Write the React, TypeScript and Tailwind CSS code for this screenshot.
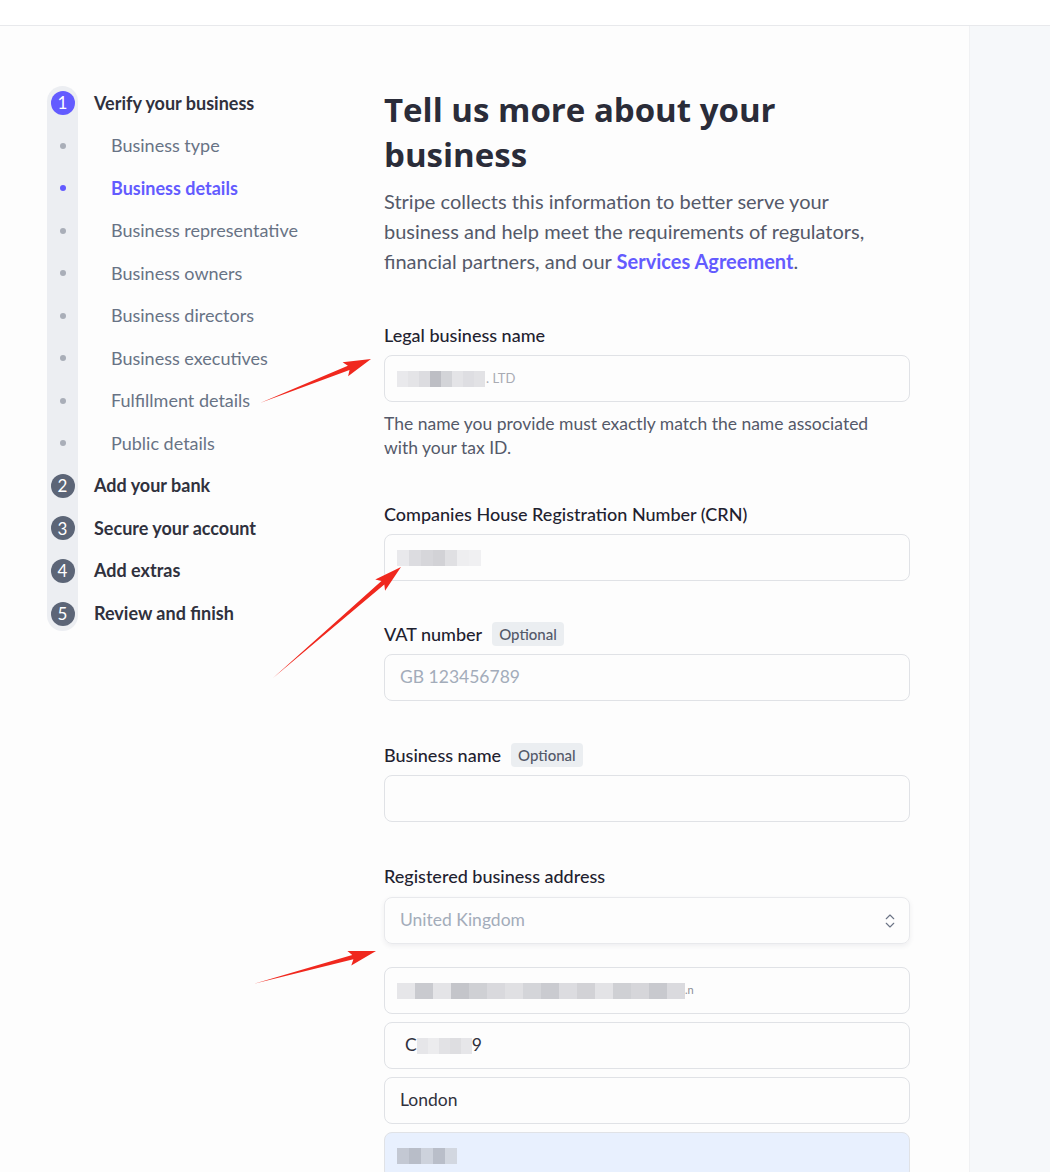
import { ChevronsUpDown } from "lucide-react";

type Step = {
  label: string;
  kind: "main" | "sub";
  num?: number;
  active?: boolean;
};

const steps: Step[] = [
  { label: "Verify your business", kind: "main", num: 1, active: true },
  { label: "Business type", kind: "sub" },
  { label: "Business details", kind: "sub", active: true },
  { label: "Business representative", kind: "sub" },
  { label: "Business owners", kind: "sub" },
  { label: "Business directors", kind: "sub" },
  { label: "Business executives", kind: "sub" },
  { label: "Fulfillment details", kind: "sub" },
  { label: "Public details", kind: "sub" },
  { label: "Add your bank", kind: "main", num: 2 },
  { label: "Secure your account", kind: "main", num: 3 },
  { label: "Add extras", kind: "main", num: 4 },
  { label: "Review and finish", kind: "main", num: 5 },
];

// pixelated redaction blocks
function Mosaic({ cells, w = 11 }: { cells: string[]; w?: number }) {
  return (
    <span className="inline-flex h-[16px] items-stretch align-middle">
      {cells.map((c, i) => (
        <span key={i} style={{ background: c, width: w }} />
      ))}
    </span>
  );
}

function Arrow({ from, to }: { from: [number, number]; to: [number, number] }) {
  const [tx, ty] = from;
  const [px, py] = to;
  const len = Math.hypot(px - tx, py - ty);
  const ux = (px - tx) / len;
  const uy = (py - ty) / len;
  const nx = -uy;
  const ny = ux;
  const L = 24;
  const bx = px - ux * L;
  const by = py - uy * L;
  const hx = px - ux * L * 1.15;
  const hy = py - uy * L * 1.15;
  const pts = [
    [tx, ty],
    [bx + nx * 2.2, by + ny * 2.2],
    [hx + nx * 7.5, hy + ny * 7.5],
    [px, py],
    [hx - nx * 7.5, hy - ny * 7.5],
    [bx - nx * 2.2, by - ny * 2.2],
  ]
    .map((p) => p.join(","))
    .join(" ");
  return <polygon points={pts} fill="#f0281e" />;
}

function Field({
  label,
  optional,
  children,
  help,
  gap = "mt-[7px]",
}: {
  label: string;
  optional?: boolean;
  children: React.ReactNode;
  help?: string;
  gap?: string;
}) {
  return (
    <div>
      <div className="flex h-[26px] items-center gap-[10px]">
        <span className="text-[18px] font-medium text-[#1f2230]">{label}</span>
        {optional && (
          <span className="rounded-[4px] bg-[#ebeef1] px-[7px] py-[1px] text-[15px] font-medium text-[#545969]">Optional</span>
        )}
      </div>
      <div className={gap}>{children}</div>
      {help && <p className="mt-[10px] max-w-[505px] text-[17.5px] leading-[24px] text-[#545969]">{help}</p>}
    </div>
  );
}

function Input({ children, className = "" }: { children?: React.ReactNode; className?: string }) {
  return (
    <div className={"flex h-[47px] items-center rounded-[8px] border border-[#e0e2e6] px-[12px] text-[17.5px] text-[#30313d] " + className}>
      {children}
    </div>
  );
}

export default function App() {
  return (
    <div className="relative h-[1172px] w-[1050px] overflow-hidden bg-white" style={{ fontFamily: "Lato, 'Open Sans', sans-serif" }}>
      <div className="h-[26px] border-b border-[#e8e9ec] bg-white" />
      <div className="flex h-[1146px]">
        <div className="flex w-[969px] bg-[#fdfdfd] pl-[47px] pt-[61px]">
          {/* Sidebar */}
          <aside className="-mt-[1px] w-[337px]">
            <div className="flex">
              <div className="flex w-[31px] flex-col items-center self-start rounded-full bg-[#eceef2]">
                {steps.map((s, i) => (
                  <div
                    key={i}
                    className={
                      "flex justify-center " +
                      (i === 0
                        ? "h-[38.5px] items-start pt-[5px]"
                        : i === steps.length - 1
                        ? "h-[38.5px] items-start pt-[9.5px]"
                        : "h-[42.5px] items-center")
                    }
                  >
                    {s.kind === "main" ? (
                      <span
                        className={
                          "flex h-[24px] w-[24px] items-center justify-center rounded-full text-[17px] text-white " +
                          (s.active ? "bg-[#635bff]" : "bg-[#5c6577]")
                        }
                      >
                        {s.num}
                      </span>
                    ) : (
                      <span className={"h-[6px] w-[6px] rounded-full " + (s.active ? "bg-[#635bff]" : "bg-[#a9aeb8]")} />
                    )}
                  </div>
                ))}
              </div>
              <div className="-mt-[4px] flex flex-col">
                {steps.map((s, i) => (
                  <div
                    key={i}
                    className={
                      "flex h-[42.5px] items-center text-[18px] " +
                      (s.kind === "main"
                        ? "pl-[16px] font-bold text-[#30313d]"
                        : s.active
                        ? "pl-[33px] font-bold text-[#635bff]"
                        : "pl-[33px] text-[#687385]")
                    }
                  >
                    {s.label}
                  </div>
                ))}
              </div>
            </div>
          </aside>

          {/* Form */}
          <main className="w-[526px]">
            <h1
              className="text-[33px] font-bold leading-[45px] text-[#2a2c39]"
              style={{ fontFamily: "'Open Sans', Lato, sans-serif" }}
            >
              Tell us more about your business
            </h1>
            <p className="mt-[9px] max-w-[505px] text-[20px] leading-[30px] text-[#545969]">
              Stripe collects this information to better serve your business and help meet the requirements of regulators, financial partners, and our{" "}
              <span className="font-bold text-[#635bff]">Services Agreement</span>.
            </p>

            <div className="mt-[46px] flex flex-col">
              <Field label="Legal business name" help="The name you provide must exactly match the name associated with your tax ID.">
                <Input>
                  <Mosaic cells={["#e9e9ec", "#e4e4e7", "#dcdce0", "#bdbec4", "#d3d4d8", "#e4e4e7", "#dedee2", "#e2e2e5"]} />
                  <span className="ml-[1px] text-[13px] text-[#a9abb3]">. LTD</span>
                </Input>
              </Field>

              <div className="mt-[41px]">
                <Field label="Companies House Registration Number (CRN)">
                  <Input>
                    <Mosaic cells={["#e9e9ec", "#dcdce0", "#d6d6da", "#d2d2d6", "#e0e0e3", "#eeeef0", "#f0f0f2"]} w={12} />
                  </Input>
                </Field>
              </div>

              <div className="mt-[40px]">
                <Field label="VAT number" optional>
                  <Input>
                    <span className="pl-[3px] text-[#a3acba]">GB 123456789</span>
                  </Input>
                </Field>
              </div>

              <div className="mt-[41px]">
                <Field label="Business name" optional>
                  <Input />
                </Field>
              </div>

              <div className="mt-[41px]">
                <Field label="Registered business address" gap="mt-[8px]">
                  <div className="flex h-[47px] items-center justify-between rounded-[8px] border border-[#e8e9ec] pl-[15px] pr-[10px] text-[17.5px] text-[#a3acba] shadow-[0_2px_5px_rgba(60,66,87,0.08)]">
                    <span>United Kingdom</span>
                    <ChevronsUpDown size={18} strokeWidth={1.5} className="text-[#6b7385]" />
                  </div>
                  <div className="mt-[23px] flex flex-col gap-[8px]">
                    <Input>
                      <Mosaic
                        cells={["#e6e6e9", "#c9cacf", "#e4e4e7", "#c4c5ca", "#cfd0d4", "#d9d9dd", "#e0e0e3", "#d4d5d9", "#cacbd0", "#dcdce0", "#d2d2d6", "#e3e3e6", "#cfd0d4", "#d6d6da", "#c8c9ce", "#dadade"]}
                        w={18}
                      />
                      <span className="text-[11px] text-[#8b8e97]">.n</span>
                    </Input>
                    <Input>
                      <span className="pl-[8px]">C</span>
                      <Mosaic cells={["#e6e6e9", "#ececee", "#e2e2e5", "#dedee1", "#e6e6e9"]} w={11} />
                      <span>9</span>
                    </Input>
                    <Input>
                      <span className="pl-[3px]">London</span>
                    </Input>
                    <Input className="border-[#dfe6f3] bg-[#e8f0fe]">
                      <Mosaic cells={["#c3c8d3", "#b8bdc8", "#cdd2dc", "#b9bec9", "#d2d7e0"]} w={12} />
                    </Input>
                  </div>
                </Field>
              </div>
            </div>
          </main>
        </div>
        <div className="flex-1 border-l border-[#f0f1f3] bg-[#f6f8fa]" />
      </div>

      {/* annotation arrows */}
      <svg className="pointer-events-none absolute left-0 top-0" width={1050} height={1172}>
        <Arrow from={[260, 403]} to={[371, 359]} />
        <Arrow from={[273, 678]} to={[401, 567]} />
        <Arrow from={[253, 984]} to={[376, 951]} />
      </svg>
    </div>
  );
}
